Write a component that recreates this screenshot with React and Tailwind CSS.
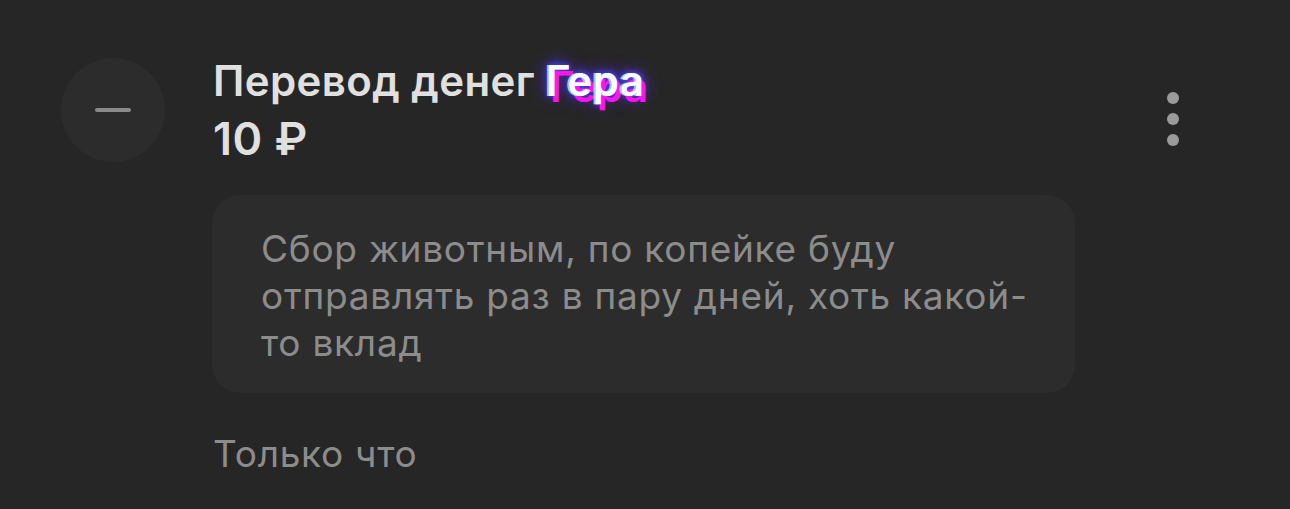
export default function App() {
  return (
    <div className="w-full h-[509px] bg-[#262626] overflow-hidden" style={{ fontFamily: 'Inter, Roboto, "Noto Sans", sans-serif' }}>
      <div className="flex pl-[61px] pt-[58px] pr-[111px]">
        {/* avatar */}
        <div className="w-[104px] h-[104px] rounded-full bg-[#2c2c2c] flex items-center justify-center shrink-0">
          <div className="w-[36px] h-[4px] rounded-full bg-[#8a8a8a]" />
        </div>

        <div className="ml-[47px] flex-1">
          <div className="flex items-start justify-between pt-[1px]">
            <div className="pl-[1px]">
              <div className="text-[42px] leading-[44px] font-semibold tracking-[0.01em] text-[#e0e0e0]">
                Перевод денег{' '}
                <span className="text-white [text-shadow:-2px_0_0_#9cc4ff,4px_6px_0_#ff14ee,0_0_5px_#3d4cff,0_0_10px_#4a3cff,0_0_18px_#6a30ff]">Гера</span>
              </div>
              <div className="mt-[11px] text-[45px] leading-[50px] font-semibold tracking-[0.01em] text-[#e0e0e0]">10 ₽</div>
            </div>
            <div className="flex flex-col gap-[9px] mt-[33px]">
              <span className="w-[12px] h-[12px] rounded-full bg-[#9a9a9a]" />
              <span className="w-[12px] h-[12px] rounded-full bg-[#9a9a9a]" />
              <span className="w-[12px] h-[12px] rounded-full bg-[#9a9a9a]" />
            </div>
          </div>

          <div className="mt-[31px] w-[863px] rounded-[28px] bg-[#2c2c2c] pl-[49px] pr-[40px] pt-[30px] pb-[27px]">
            <p className="text-[37px] leading-[47px] tracking-[0.02em] text-[#8c8c8c]">
              Сбор животным, по копейке буду отправлять раз в пару дней, хоть какой-то вклад
            </p>
          </div>

          <div className="mt-[37px] pl-[1px] text-[37px] leading-[47px] tracking-[0.02em] text-[#8c8c8c]">Только что</div>
        </div>
      </div>
    </div>
  )
}
